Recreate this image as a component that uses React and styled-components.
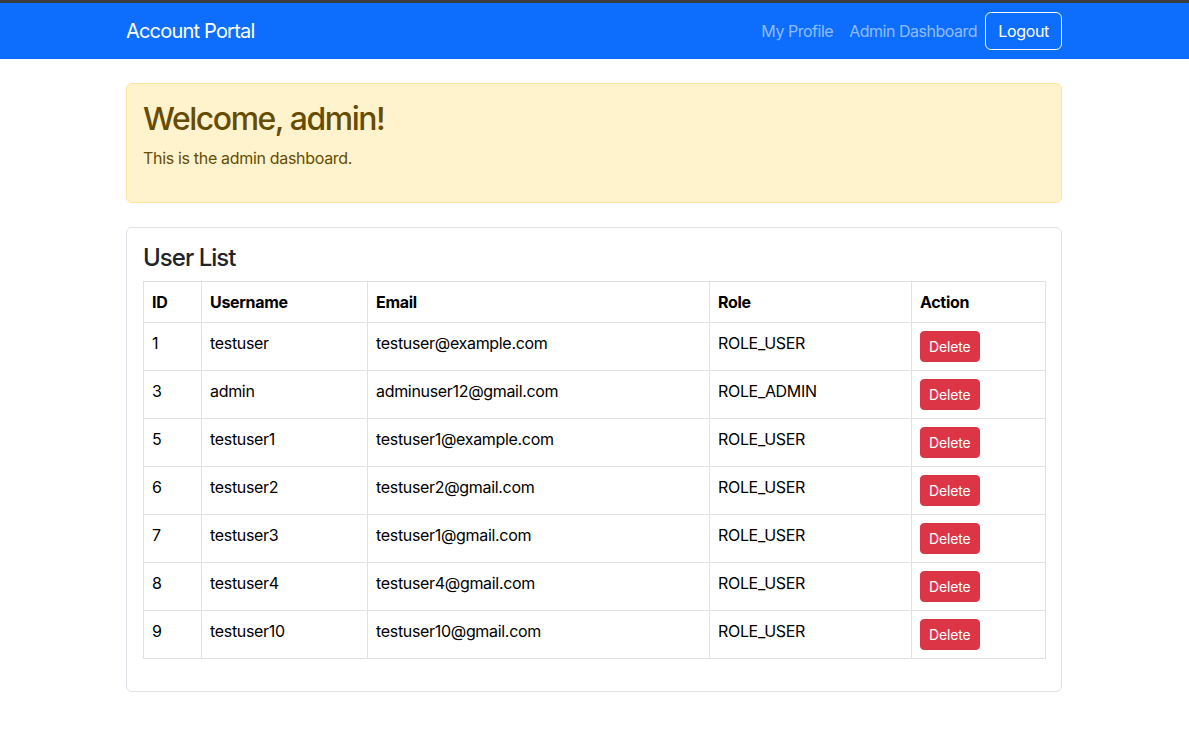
import React from 'react';
import styled, { createGlobalStyle } from 'styled-components';

const GlobalStyle = createGlobalStyle`
  *, *::before, *::after {
    box-sizing: border-box;
  }
  body {
    margin: 0;
    font-family: Inter, "Noto Sans", "Liberation Sans", sans-serif;
    font-size: 16px;
    line-height: 1.5;
    letter-spacing: -0.02em;
    color: #212529;
    background: #fff;
    border-top: 3px solid #3b3c3e;
  }
`;

const users = [
  { id: 1, username: 'testuser', email: 'testuser@example.com', role: 'ROLE_USER' },
  { id: 3, username: 'admin', email: 'adminuser12@gmail.com', role: 'ROLE_ADMIN' },
  { id: 5, username: 'testuser1', email: 'testuser1@example.com', role: 'ROLE_USER' },
  { id: 6, username: 'testuser2', email: 'testuser2@gmail.com', role: 'ROLE_USER' },
  { id: 7, username: 'testuser3', email: 'testuser1@gmail.com', role: 'ROLE_USER' },
  { id: 8, username: 'testuser4', email: 'testuser4@gmail.com', role: 'ROLE_USER' },
  { id: 9, username: 'testuser10', email: 'testuser10@gmail.com', role: 'ROLE_USER' },
];

const columns = [
  { label: 'ID', width: 58 },
  { label: 'Username', width: 166 },
  { label: 'Email', width: 342 },
  { label: 'Role', width: 202 },
  { label: 'Action', width: 134 },
];

const Navbar = styled.nav`
  background: #0d6efd;
  height: 56px;
  display: flex;
  align-items: center;
`;

const Container = styled.div`
  width: 961px;
  margin: 0 auto;
  padding: 0 13px 0 12px;
`;

const NavInner = styled(Container)`
  display: flex;
  align-items: center;
  justify-content: space-between;
`;

const Brand = styled.a`
  color: #fff;
  font-size: 20px;
  line-height: 30px;
  letter-spacing: -0.04em;
  text-decoration: none;
`;

const NavLinks = styled.div`
  display: flex;
  align-items: center;
`;

const NavLink = styled.a`
  color: rgba(255, 255, 255, 0.55);
  padding: 8px;
  text-decoration: none;
  font-size: 16px;
  letter-spacing: -0.03em;
`;

const LogoutButton = styled.button`
  font: inherit;
  letter-spacing: -0.02em;
  color: #fff;
  background: transparent;
  border: 1px solid #f8f9fa;
  border-radius: 6px;
  padding: 6px 12px;
  line-height: 1.5;
  cursor: pointer;
`;

const Main = styled(Container)`
  padding-top: 24px;
`;

const Alert = styled.div`
  background: #fff3cd;
  border: 1px solid #ffe69c;
  color: #664d03;
  border-radius: 6px;
  padding: 16px;
  margin-bottom: 24px;
`;

const AlertTitle = styled.h2`
  margin: 0 0 8px;
  font-size: 31.9px;
  font-weight: 500;
  line-height: 1.2;
  letter-spacing: -0.045em;
`;

const AlertText = styled.p`
  margin: 0 0 16px;
`;

const Card = styled.div`
  border: 1px solid #dee2e6;
  border-radius: 6px;
  padding: 16px;
`;

const CardTitle = styled.h4`
  margin: 0 0 8px;
  font-size: 24px;
  font-weight: 500;
  line-height: 1.2;
  letter-spacing: -0.04em;
`;

const Table = styled.table`
  width: 100%;
  border-collapse: collapse;
  table-layout: fixed;
  margin-bottom: 16px;
  color: #000;
`;

const Th = styled.th`
  text-align: left;
  font-weight: 700;
  padding: 8px;
  border: 1px solid #dee2e6;
`;

const Td = styled.td`
  padding: 8px;
  border: 1px solid #dee2e6;
  vertical-align: top;
`;

const DeleteButton = styled.button`
  font: inherit;
  font-size: 14px;
  line-height: 1.5;
  letter-spacing: -0.01em;
  color: #fff;
  background: #dc3545;
  border: 1px solid #dc3545;
  border-radius: 4px;
  padding: 4px 8px;
  cursor: pointer;
`;

export default function App() {
  return (
    <>
      <GlobalStyle />
      <Navbar>
        <NavInner>
          <Brand href="#">Account Portal</Brand>
          <NavLinks>
            <NavLink href="#">My Profile</NavLink>
            <NavLink href="#">Admin Dashboard</NavLink>
            <LogoutButton>Logout</LogoutButton>
          </NavLinks>
        </NavInner>
      </Navbar>
      <Main>
        <Alert>
          <AlertTitle>Welcome, admin!</AlertTitle>
          <AlertText>This is the admin dashboard.</AlertText>
        </Alert>
        <Card>
          <CardTitle>User List</CardTitle>
          <Table>
            <colgroup>
              {columns.map((c) => (
                <col key={c.label} style={{ width: c.width }} />
              ))}
            </colgroup>
            <thead>
              <tr>
                {columns.map((c) => (
                  <Th key={c.label}>{c.label}</Th>
                ))}
              </tr>
            </thead>
            <tbody>
              {users.map((u) => (
                <tr key={u.id}>
                  <Td>{u.id}</Td>
                  <Td>{u.username}</Td>
                  <Td>{u.email}</Td>
                  <Td>{u.role}</Td>
                  <Td>
                    <DeleteButton>Delete</DeleteButton>
                  </Td>
                </tr>
              ))}
            </tbody>
          </Table>
        </Card>
      </Main>
    </>
  );
}
